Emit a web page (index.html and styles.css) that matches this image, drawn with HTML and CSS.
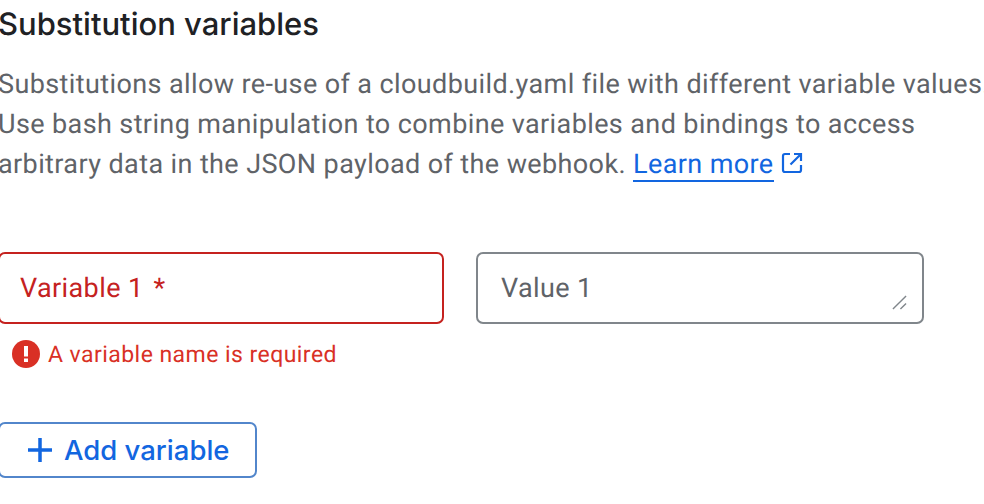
FILE: index.html
```html
<!DOCTYPE html>
<html lang="en">
<head>
<meta charset="utf-8">
<title>Substitution variables</title>
<link rel="stylesheet" href="styles.css">
</head>
<body>
<main class="page">
  <h2 class="title">Substitution variables</h2>
  <p class="desc">Substitutions allow re-use of a cloudbuild.yaml file with different variable values.<br>Use bash string manipulation to combine variables and bindings to access<br>arbitrary data in the JSON payload of the webhook. <a class="link" href="#">Learn more</a><svg class="ext" viewBox="0 0 24 24" aria-hidden="true"><path d="M10 3H5A2 2 0 0 0 3 5v14a2 2 0 0 0 2 2h14a2 2 0 0 0 2-2v-5M14 3h7v7M21 3 10.500 13.500" fill="none" stroke="currentColor" stroke-width="2.200"/></svg></p>
  <div class="fields">
    <div class="col">
      <div class="field field-error">Variable 1 <span class="req">*</span></div>
      <div class="error">
        <svg class="err-icon" viewBox="0 0 28 28" aria-hidden="true"><circle cx="14" cy="14" r="14" fill="#d93025"/><rect x="12" y="6" width="4" height="10.500" fill="#fff"/><rect x="12" y="18.500" width="4" height="3.500" fill="#fff"/></svg>
        <span>A variable name is required</span>
      </div>
    </div>
    <div class="col col-value">
      <div class="field field-plain">Value 1
        <svg class="grip" viewBox="0 0 16 16" aria-hidden="true"><path d="M1 15 15 1M9 15l6-6" fill="none" stroke="#80868b" stroke-width="1.500"/></svg>
      </div>
    </div>
  </div>
  <button class="add" type="button">
    <svg class="plus" viewBox="0 0 24 24" aria-hidden="true"><path d="M12 0v24M0 12h24" fill="none" stroke="currentColor" stroke-width="3.500"/></svg>
    <span>Add variable</span>
  </button>
</main>
</body>
</html>
```
FILE: styles.css
```css
html, body {
  margin: 0;
  padding: 0;
  background: #fff;
  overflow: hidden;
}
body {
  width: 984px;
  height: 504px;
  font-family: Roboto, "Liberation Sans", sans-serif;
  text-rendering: geometricPrecision;
}
.page {
  display: flex;
  flex-direction: column;
  align-items: flex-start;
  margin-left: -2px;
  width: 986px;
  overflow: hidden;
}
.title {
  margin: 7px 0 0;
  font-family: Inter, Roboto, sans-serif;
  font-size: 31px;
  line-height: 36px;
  font-weight: 500;
  color: #202124;
}
.desc {
  margin: 21px 0 0;
  font-size: 27px;
  line-height: 40px;
  color: #5f6368;
  letter-spacing: 0.39px;
  white-space: nowrap;
}
.link {
  color: #1266e0;
  text-decoration: none;
  border-bottom: 2px solid #1266e0;
}
.ext {
  width: 24px;
  height: 24px;
  margin-left: 6px;
  vertical-align: -2px;
  color: #1266e0;
}
.fields {
  display: flex;
  gap: 32px;
  margin-top: 68px;
}
.col {
  width: 446px;
}
.col-value {
  width: 448px;
}
.field {
  position: relative;
  box-sizing: border-box;
  height: 72px;
  border: 2px solid;
  border-radius: 7px;
  padding: 0 20px;
  font-size: 27px;
  line-height: 68px;
  letter-spacing: 0.39px;
}
.req {
  margin-left: 3px;
}
.field-error {
  border-color: #c5221f;
  color: #c5221f;
}
.field-plain {
  border-color: #80868b;
  color: #5f6368;
  padding-left: 23px;
}
.grip {
  position: absolute;
  right: 15px;
  bottom: 12px;
  width: 15px;
  height: 15px;
}
.error {
  display: flex;
  align-items: center;
  gap: 8px;
  margin-top: 16px;
  padding-left: 14px;
  height: 28px;
  font-size: 23px;
  letter-spacing: 0.45px;
  color: #d93025;
}
.err-icon {
  width: 28px;
  height: 28px;
  flex: none;
}
.add {
  display: flex;
  align-items: center;
  gap: 12px;
  box-sizing: border-box;
  width: 259px;
  height: 56px;
  margin-top: 54px;
  padding: 0 0 0 28px;
  background: #fff;
  border: 2px solid #5286cb;
  border-radius: 7px;
  color: #1266e0;
  font-family: Inter, Roboto, sans-serif;
  font-size: 27.500px;
  font-weight: 500;
}
.plus {
  width: 24px;
  height: 24px;
  flex: none;
}
```
